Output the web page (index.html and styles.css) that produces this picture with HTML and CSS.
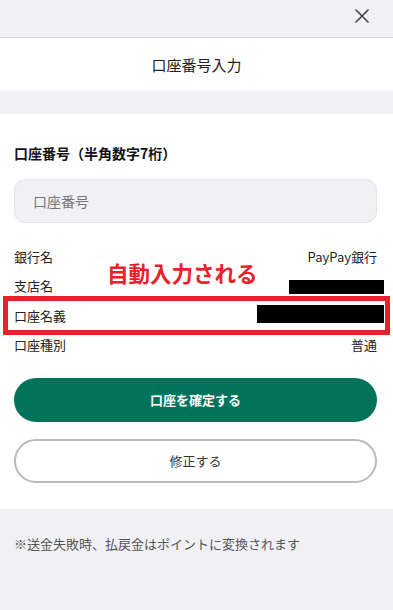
FILE: index.html
```html
<!DOCTYPE html>
<html lang="ja">
<head>
<meta charset="utf-8">
<title>口座番号入力</title>
<link rel="stylesheet" href="styles.css">
</head>
<body>
<div class="topbar">
  <svg class="close" width="14" height="14" viewBox="0 0 14 14" aria-label="閉じる"><path d="M1 1 L13 13 M13 1 L1 13" stroke="#444" stroke-width="1.6" stroke-linecap="round" fill="none"/></svg>
</div>
<header class="header">口座番号入力</header>
<div class="band"></div>
<main class="card">
  <div class="label">口座番号（半角数字7桁）</div>
  <div class="input">口座番号</div>
  <div class="rows">
    <div class="row"><span>銀行名</span><span>PayPay銀行</span></div>
    <div class="row"><span>支店名</span><span class="redact redact-sm"></span></div>
    <div class="row"><span>口座名義</span><span class="redact redact-lg"></span></div>
    <div class="row"><span>口座種別</span><span>普通</span></div>
  </div>
  <button class="btn btn-primary">口座を確定する</button>
  <button class="btn btn-secondary">修正する</button>
  <div class="annot-text">自動入力される</div>
  <div class="annot-box"></div>
</main>
<footer class="footer">※送金失敗時、払戻金はポイントに変換されます</footer>
</body>
</html>
```
FILE: styles.css
```css
* { box-sizing: border-box; }
html, body {
  margin: 0;
  padding: 0;
  background: #f0f0f5;
  font-family: "Noto Sans CJK JP", "Noto Sans", sans-serif;
  color: #222;
}
.topbar {
  height: 38px;
  border-bottom: 1px solid #d8d8de;
  display: flex;
  justify-content: flex-end;
  align-items: flex-start;
  padding: 9px 24px 0 0;
}
.close { display: block; }
.header {
  height: 52px;
  background: #fff;
  display: flex;
  align-items: center;
  justify-content: center;
  font-size: 15px;
  color: #222;
}
.band { height: 24px; }
.card {
  position: relative;
  background: #fff;
  padding: 29px 16px 26px 14px;
}
.label {
  font-size: 14px;
  font-weight: bold;
  line-height: 20px;
  color: #111;
}
.input {
  margin-top: 16px;
  height: 44px;
  border: 1.5px solid #e3e3e9;
  border-radius: 11px;
  background: #f0f0f5;
  display: flex;
  align-items: center;
  padding-left: 18px;
  font-size: 14px;
  color: #777;
}
.rows { margin-top: 19px; }
.row {
  height: 29.3px;
  display: flex;
  justify-content: space-between;
  align-items: center;
  font-size: 13px;
  color: #222;
}
.redact {
  display: inline-block;
  background: #000;
  margin-right: -7px;
}
.redact-sm { width: 95px; height: 14px; margin-top: 2px; }
.redact-lg { width: 127px; height: 18px; margin-top: -2px; }
.btn {
  display: flex;
  align-items: center;
  justify-content: center;
  width: 363px;
  height: 44px;
  border-radius: 22px;
  font-family: inherit;
  font-size: 13px;
  padding: 0 0 2px;
}
.btn-primary {
  margin-top: 19px;
  background: #00735a;
  color: #fff;
  font-weight: bold;
  border: none;
}
.btn-secondary {
  margin-top: 17px;
  background: #fff;
  color: #333;
  border: 2px solid #b9b9c1;
}
.annot-text {
  position: absolute;
  left: 107px;
  top: 146px;
  font-size: 21.5px;
  line-height: 26px;
  font-weight: bold;
  color: #e8202a;
  letter-spacing: 0;
}
.annot-box {
  position: absolute;
  left: 3px;
  top: 182px;
  width: 387px;
  height: 39px;
  border: 5px solid #e8202a;
}
.footer {
  padding: 25px 14px 0;
  font-size: 13px;
  line-height: 20px;
  color: #555;
}
```
